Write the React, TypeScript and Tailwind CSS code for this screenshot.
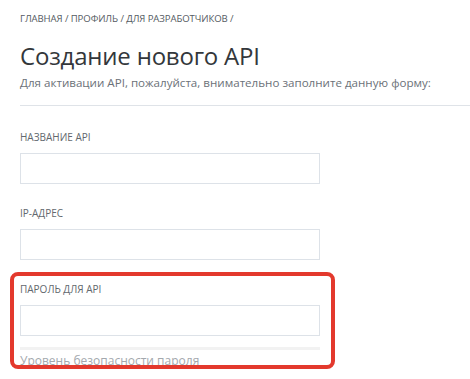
export default function App() {
  const fields = [
    { label: "НАЗВАНИЕ API" },
    { label: "IP-АДРЕС" },
  ];

  return (
    <div className="relative h-[379px] w-[470px] overflow-hidden bg-white font-['Open_Sans',sans-serif]">
      <div className="pl-5 pt-[12px]">
        <nav className="text-[9.6px] leading-[14px] tracking-[-0.1px] text-[#555b62]">
          ГЛАВНАЯ / ПРОФИЛЬ / ДЛЯ РАЗРАБОТЧИКОВ /
        </nav>
        <h1 className="mt-[15px] text-[24px] leading-[30px] tracking-[-0.2px] text-[#33373b]">
          Создание нового API
        </h1>
        <p className="mt-[4px] text-[11.6px] leading-[16px] text-[#6b7178]">
          Для активации API, пожалуйста, внимательно заполните данную форму:
        </p>
        <div className="mt-[14px] h-px bg-[#dfe3e8]" />

        <form className="pt-[24px]">
          {fields.map((f) => (
            <div key={f.label} className="mb-[22px]">
              <label className="block text-[10px] leading-[14px] text-[#62686e]">{f.label}</label>
              <input className="mt-[9px] block h-[31px] w-[300px] border border-[#dde2e8] outline-none" />
            </div>
          ))}
          <div>
            <label className="block text-[10px] leading-[14px] text-[#62686e]">ПАРОЛЬ ДЛЯ API</label>
            <input
              type="password"
              className="mt-[9px] block h-[31px] w-[300px] border border-[#dde2e8] outline-none"
            />
            <div className="mt-[11px] h-[3px] w-[300px] bg-[#f2f2f2]" />
            <p className="mt-[3px] text-[12px] leading-[16px] text-[#a3a8ad]">Уровень безопасности пароля</p>
          </div>
        </form>
      </div>

      {/* annotation highlight */}
      <div className="pointer-events-none absolute left-[10px] top-[272px] h-[97px] w-[325px] rounded-[8px] border-4 border-[#e3392d]" />
    </div>
  );
}
